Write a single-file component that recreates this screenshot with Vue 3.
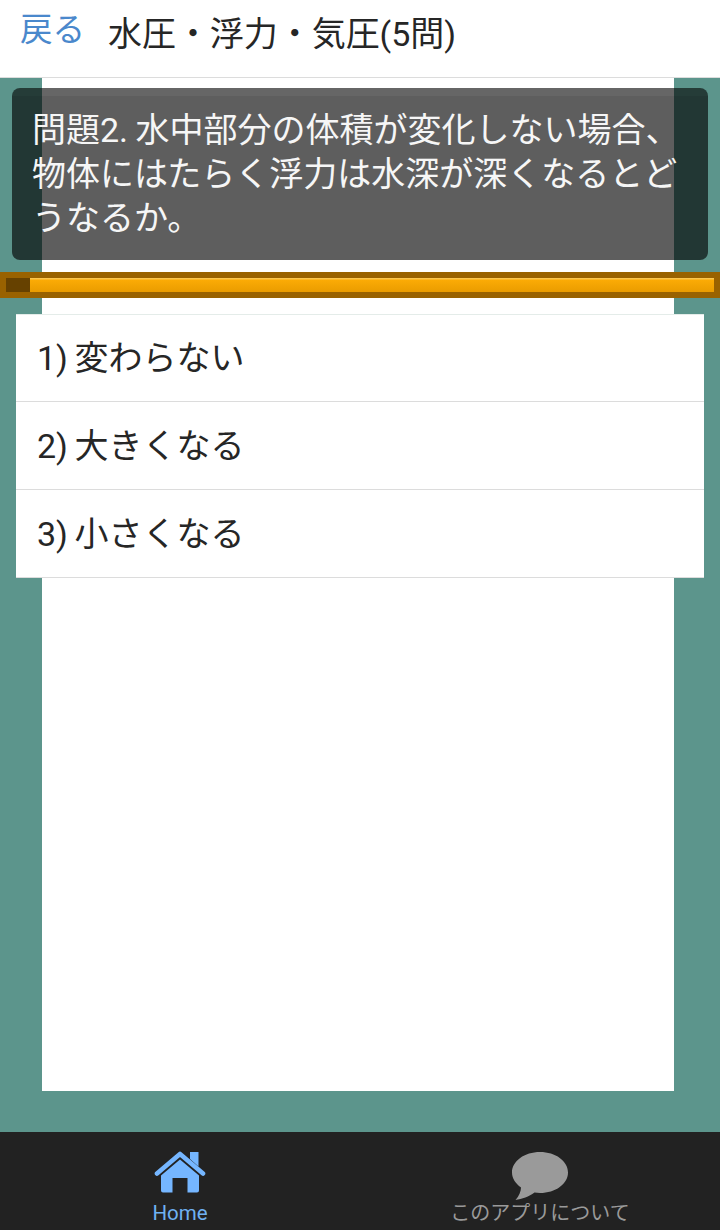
<script setup>
const choices = ['1) 変わらない', '2) 大きくなる', '3) 小さくなる']
</script>

<template>
  <div class="app">
    <header class="head">
      <a class="back">戻る</a>
      <h1 class="title">水圧・浮力・気圧(5問)</h1>
    </header>
    <main class="main">
      <p class="question">問題2. 水中部分の体積が変化しない場合、物体にはたらく浮力は水深が深くなるとどうなるか。</p>
      <div class="progress"><div class="track"><div class="done"></div></div></div>
      <ul class="choices">
        <li v-for="c in choices" :key="c" class="choice">{{ c }}</li>
      </ul>
    </main>
    <footer class="foot">
      <div class="tab tab-on">
        <svg class="home" viewBox="0 0 52 42" width="52" height="42">
          <path fill="#75b6ff" d="M36 1h8.500v14.500L36 8z"/>
          <path fill="none" stroke="#75b6ff" stroke-width="4.600" stroke-linecap="round" stroke-linejoin="round" d="M3 22.500 26 3l23 19.500"/>
          <path fill="#75b6ff" d="M26 8.500 45 24.500v15a2 2 0 0 1-2 2H33.500V27h-15v14.500H9a2 2 0 0 1-2-2v-15z"/>
        </svg>
        <span class="label">Home</span>
      </div>
      <div class="tab">
        <svg class="bubble" viewBox="0 0 56 48" width="56" height="48">
          <path fill="#9a9a9a" d="M28 0c15.500 0 28 9 28 20.500S43.500 41 28 41c-2 0-3.800-.1-5.500-.4C17 44.500 10 47.500 3.500 48 7 44 9 39.500 9 35.500 3.500 31.500 0 26.300 0 20.500 0 9 12.500 0 28 0z"/>
        </svg>
        <span class="label">このアプリについて</span>
      </div>
    </footer>
  </div>
</template>

<style scoped>
.app {
  width: 720px;
  height: 1230px;
  display: flex;
  flex-direction: column;
  font-family: Roboto, "Noto Sans CJK JP", sans-serif;
  overflow: hidden;
}
.head {
  height: 77px;
  flex: none;
  display: flex;
  align-items: flex-start;
  gap: 23px;
  padding: 0 0 0 20px;
  background: #fff;
  border-bottom: 1px solid #dcdcdc;
}
.back {
  font-size: 32.500px;
  line-height: 60px;
  color: #4a88cc;
}
.title {
  margin: 0;
  font-size: 34px;
  line-height: 68px;
  font-weight: 400;
  letter-spacing: -0.05px;
  color: #262626;
}
.main {
  flex: 1;
  display: flex;
  flex-direction: column;
  padding: 10px 0 0;
  background: linear-gradient(#fff, #fff) 42px 0 / 632px 1013px no-repeat, #5c958c;
}
.question {
  box-sizing: border-box;
  height: 172px;
  margin: 0 12px;
  padding: 20px 20px 0;
  border-radius: 8px;
  background: linear-gradient(rgba(0, 0, 0, 0.6) 8px, rgba(0, 0, 0, 0.63) 8px);
  color: #f6f6f6;
  font-size: 34px;
  line-height: 44px;
  word-spacing: -1px;
}
.progress {
  height: 26px;
  margin-top: 12px;
  padding: 6px;
  box-sizing: border-box;
  background: #996200;
}
.track {
  height: 14px;
  background: linear-gradient(#fcc64e 0, #fcc64e 1px, #fbab06 2px, #ea9c00 100%);
}
.done {
  width: 24px;
  height: 100%;
  background: #664100;
}
.choices {
  list-style: none;
  margin: 16px 16px 0;
  padding: 0;
  background: #fff;
  box-shadow: inset 0 1px 0 #e4ece9;
}
.choice {
  box-sizing: border-box;
  height: 88px;
  padding: 0 0 4px 21px;
  display: flex;
  align-items: center;
  font-size: 34px;
  color: #262626;
  border-bottom: 1px solid #dcdcdc;
  word-spacing: -2px;
}
.foot {
  flex: none;
  height: 98px;
  display: flex;
  background: #222;
}
.tab {
  flex: 1;
  position: relative;
  display: flex;
  flex-direction: column;
  align-items: center;
  color: #9a9a9a;
}
.tab-on {
  color: #6fb1f2;
}
.home {
  margin-top: 19px;
}
.bubble {
  margin-top: 20px;
}
.label {
  position: absolute;
  top: 67px;
  font-size: 20px;
  line-height: 28px;
  white-space: nowrap;
}
.tab-on .label {
  font-size: 20.500px;
}
</style>
